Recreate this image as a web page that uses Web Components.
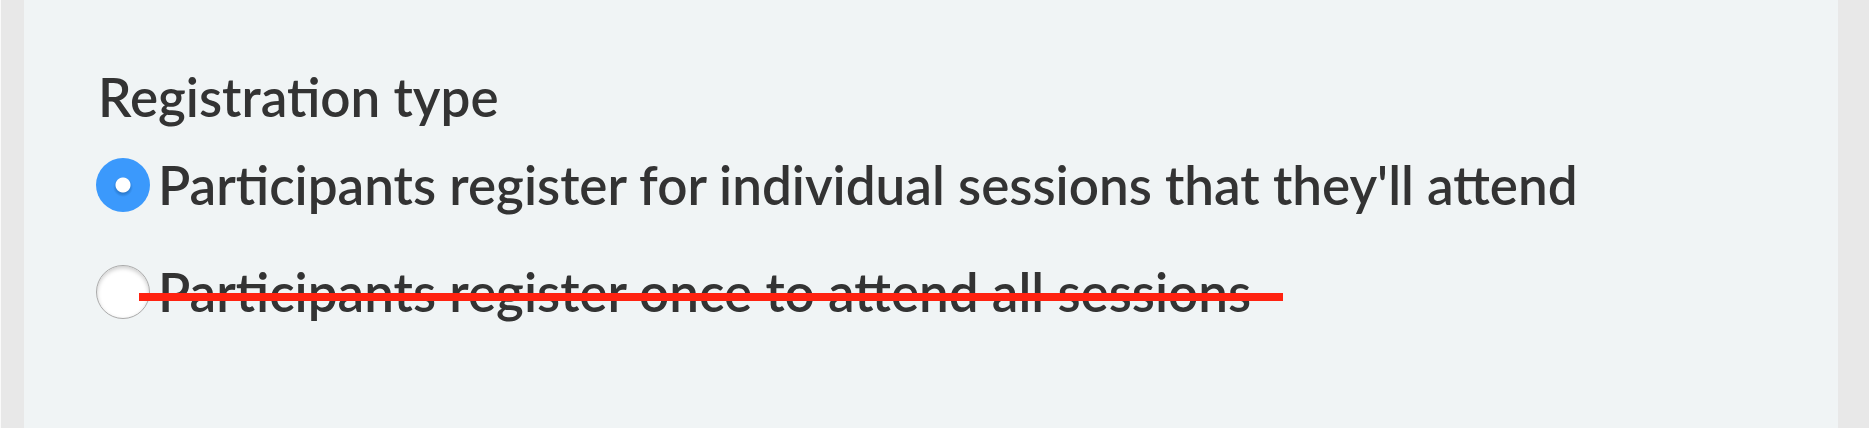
<!DOCTYPE html>
<html lang="en"><head><meta charset="utf-8"><title>Registration type</title>
<style>body{margin:0;background:#e8e8e8;border-left:1px solid #fafafa;font-family:Lato,"Open Sans",sans-serif}</style></head><body>
<registration-panel>
<radio-option value="individual" checked>Participants register for individual sessions that they'll attend</radio-option>
<radio-option value="once" struck>Participants register once to attend all sessions</radio-option>
</registration-panel>
<script>
class RegistrationPanel extends HTMLElement{
constructor(){super();this.attachShadow({mode:'open'}).innerHTML=`<style>
:host{display:block;box-sizing:border-box;min-height:100vh;margin:0 31px 0 23px;padding:64px 72px;background:#f0f4f5;color:#333;font-size:53px;font-weight:600}
fieldset{border:0;margin:0;padding:0;min-width:0}
legend{padding:0 0 0 2px;line-height:66px}
.options{display:grid;gap:43px;padding-top:23px}
</style><fieldset><legend>Registration type</legend><div class="options"><slot></slot></div></fieldset>`}}
class RadioOption extends HTMLElement{
connectedCallback(){if(this.shadowRoot)return;this.attachShadow({mode:'open'}).innerHTML=`<style>
:host{display:block;line-height:64px}
label{display:flex;width:max-content;max-width:100%;align-items:center;gap:8px;position:relative}
input{appearance:none;flex:none;margin:0;width:54px;height:54px;box-sizing:border-box;border-radius:50%;background:#fff;border:1px solid #aaa;box-shadow:inset 0 2px 4px #ccc}
input:checked{border:0;box-shadow:none;background:radial-gradient(circle,#fff 7px,transparent 8px),radial-gradient(circle at 50% 29px,#2878cc 6px,#3b99fc 10px)}
:host([struck]) label::after{content:"";position:absolute;left:43px;right:-32px;top:33px;height:8px;background:#ff2210}
</style><label><input type="radio" name="registration"><span><slot></slot></span></label>`;
const i=this.shadowRoot.querySelector('input');i.value=this.getAttribute('value');i.checked=this.hasAttribute('checked')}}
customElements.define('registration-panel',RegistrationPanel);
customElements.define('radio-option',RadioOption);
</script></body></html>
